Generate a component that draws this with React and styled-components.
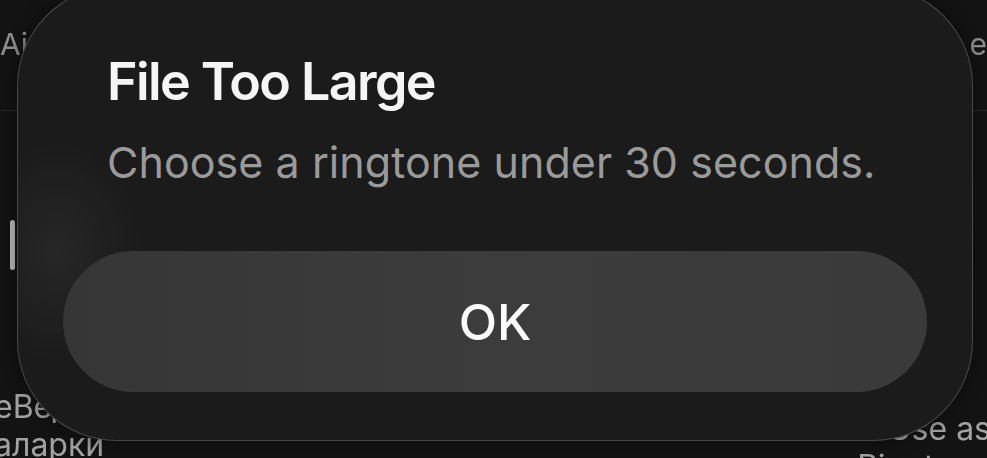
import styled, { createGlobalStyle } from "styled-components";

const GlobalStyle = createGlobalStyle`
    html, body {
        margin: 0;
        padding: 0;
        background: #131313;
    }
    body {
        font-family: Inter, "Noto Sans", "Liberation Sans", sans-serif;
    }
`;

const Screen = styled.div`
    position: relative;
    width: 987px;
    height: 458px;
    overflow: hidden;
    background: #131313;
`;

const Backdrop = styled.div`
    display: flex;
    flex-direction: column;
    height: 100%;
    color: #8d8d8d;
    font-size: 30px;
    filter: blur(0.4px);
`;

const TopRow = styled.div`
    display: flex;
    justify-content: space-between;
    align-items: center;
    height: 111px;
    border-bottom: 1px solid #2a2a2a;
    box-sizing: border-box;

    span {
        margin-top: -22px;
    }
`;

const Middle = styled.div`
    flex: 1;
    display: flex;
    align-items: center;
    justify-content: space-between;
    padding: 0 0 0 10px;
`;

const SideCard = styled.div`
    width: 5px;
    height: 50px;
    border-radius: 3px;
    background: #b9b9b9;
    margin-top: -10px;
`;

const BottomRow = styled.div`
    display: flex;
    justify-content: space-between;
    height: 70px;
    font-size: 32px;
    line-height: 38px;
    color: #a2a2a2;
`;

const BottomLeft = styled.div`
    margin-left: -6px;
`;

const BottomRight = styled.div`
    text-align: right;
    margin-right: -4px;
    padding-top: 22px;
`;

const Overlay = styled.div`
    position: absolute;
    left: 17px;
    top: -14px;
    width: 956px;
    height: 455px;
    box-sizing: border-box;
    border-radius: 100px;
    border: 1.5px solid rgba(255, 255, 255, 0.2);
    background:
        radial-gradient(ellipse 120px 160px at 40px 265px, rgba(255, 255, 255, 0.05), transparent 70%),
        #1b1b1b;
    box-shadow: 0 0 18px rgba(0, 0, 0, 0.45);
    display: flex;
    flex-direction: column;
    padding: 64px 45px 48px;
`;

const Title = styled.h2`
    margin: 0 0 0 44px;
    font-size: 52px;
    line-height: 62px;
    font-weight: 600;
    letter-spacing: -1.6px;
    color: #f5f5f5;
`;

const Message = styled.p`
    margin: 23px 0 0 44px;
    font-size: 43px;
    line-height: 52px;
    font-weight: 400;
    letter-spacing: 0.05px;
    color: #9a9a9a;
`;

const Button = styled.button`
    margin-top: 63px;
    height: 141px;
    width: 100%;
    border: none;
    border-radius: 71px;
    background: linear-gradient(90deg, #363636 0%, #3c3c3c 50%, #3a3a3a 100%);
    color: #fafafa;
    font-family: inherit;
    font-size: 50px;
    font-weight: 500;
    cursor: pointer;
`;

const App = () => {
    return (
        <>
            <GlobalStyle />
            <Screen>
                <Backdrop>
                    <TopRow>
                        <span>Air</span>
                        <span>e</span>
                    </TopRow>
                    <Middle>
                        <SideCard />
                    </Middle>
                    <BottomRow>
                        <BottomLeft>
                            еВед
                            <br />
                            аларки
                        </BottomLeft>
                        <BottomRight>
                            Use as
                            <br />
                            Ringtone
                        </BottomRight>
                    </BottomRow>
                </Backdrop>
                <Overlay>
                    <Title>File Too Large</Title>
                    <Message>Choose a ringtone under 30 seconds.</Message>
                    <Button type="button">OK</Button>
                </Overlay>
            </Screen>
        </>
    );
};

export default App;
